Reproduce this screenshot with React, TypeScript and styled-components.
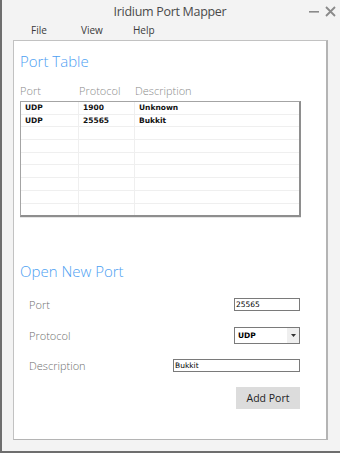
import React from "react";
import styled, { createGlobalStyle } from "styled-components";

const Global = createGlobalStyle`
  html, body { margin: 0; padding: 0; background: #f3f3f3; }
  * { box-sizing: border-box; }
`;

const Window = styled.div`
  width: 340px;
  height: 453px;
  background: #f3f3f3;
  border-left: 2px solid #6e6e6e;
  border-bottom: 2px solid #6e6e6e;
  display: flex;
  flex-direction: column;
  font-family: "Open Sans", "Liberation Sans", sans-serif;
`;

const TitleBar = styled.div`
  height: 22px;
  display: grid;
  grid-template-columns: 1fr;
  grid-template-rows: 22px;
  align-items: center;
`;

const Title = styled.div`
  grid-area: 1 / 1;
  justify-self: center;
  white-space: nowrap;
  font-size: 12.5px;
  letter-spacing: -0.3px;
  color: #4a4a4a;
  margin-left: -2px;
`;

const Controls = styled.div`
  grid-area: 1 / 1;
  justify-self: end;
  display: flex;
  align-items: center;
  gap: 5px;
  padding-right: 4px;
`;

const MenuBar = styled.div`
  height: 16px;
  display: flex;
  align-items: center;
  padding-left: 29px;
`;

const MenuItem = styled.div<{ $w: number }>`
  width: ${(p) => p.$w}px;
  font-size: 10px;
  color: #3a3a3a;
`;

const Panel = styled.div`
  margin: 2px 0 0 11px;
  width: 315px;
  height: 400px;
  background: #fff;
  border: 1px solid #c2c2c2;
  border-right: 2px solid #b4b4b4;
  border-bottom: 1px solid #b4b4b4;
  padding: 0 0 0 6px;
  display: flex;
  flex-direction: column;
`;

const Heading = styled.div<{ $top: number }>`
  margin-top: ${(p) => p.$top}px;
  height: 22px;
  line-height: 22px;
  font-size: 15px;
  font-weight: 300;
  color: #4da0f2;
`;

const ColHeads = styled.div`
  margin-top: 12px;
  display: grid;
  grid-template-columns: 59px 56px 1fr;
  font-size: 11px;
  font-weight: 300;
  color: #8a8a8a;
  height: 14px;
  line-height: 14px;
`;

const Table = styled.div`
  margin-top: 3px;
  width: 281px;
  height: 116px;
  border: 1px solid #a4a4a4;
  border-right: 2px solid #8e8e8e;
  border-bottom: 2px solid #8e8e8e;
  box-shadow: 0 1px 0 #e6e6e6;
  display: flex;
  flex-direction: column;
  overflow: hidden;
`;

const Row = styled.div`
  flex: 0 0 12.7px;
  display: grid;
  grid-template-columns: 58px 56px 1fr;
  border-bottom: 1px solid #efefef;
  &:last-child { border-bottom: none; }
`;

const Cell = styled.div`
  border-right: 1px solid #efefef;
  padding-left: 4px;
  font-family: "DejaVu Sans", "Liberation Sans", sans-serif;
  font-weight: bold;
  font-size: 7.5px;
  line-height: 11.7px;
  color: #111;
  &:last-child { border-right: none; }
`;

const Form = styled.div`
  display: flex;
  flex-direction: column;
  padding-left: 9px;
  width: 280px;
`;

const FormRow = styled.div<{ $h: number; $gap: number }>`
  height: ${(p) => p.$h}px;
  margin-top: ${(p) => p.$gap}px;
  display: flex;
  align-items: center;
  justify-content: space-between;
`;

const Label = styled.div`
  font-size: 11px;
  font-weight: 300;
  color: #6e6e6e;
`;

const Field = styled.div<{ $w: number; $h: number }>`
  width: ${(p) => p.$w}px;
  height: ${(p) => p.$h}px;
  border: 1px solid #7a7a7a;
  background: #fff;
  display: flex;
  align-items: center;
  padding-left: 1px;
  font-family: "DejaVu Sans", "Liberation Sans", sans-serif;
  font-size: 7.5px;
  color: #000;
`;

const SelectText = styled.span`
  flex: 1;
  padding-left: 2px;
  font-weight: bold;
`;

const SelectBtn = styled.div`
  width: 12px;
  height: 100%;
  background: #efefef;
  display: flex;
  align-items: center;
  justify-content: center;
`;

const ButtonRow = styled.div`
  margin-top: 15px;
  display: flex;
  justify-content: flex-end;
`;

const Button = styled.div`
  width: 64px;
  height: 22px;
  background: #dcdcdc;
  display: flex;
  align-items: center;
  justify-content: center;
  font-size: 10.5px;
  color: #222;
`;

const rows: [string, string, string][] = [
  ["UDP", "1900", "Unknown"],
  ["UDP", "25565", "Bukkit"],
];

export default function App() {
  const all = [...rows, ...Array.from({ length: 7 }, () => ["", "", ""] as [string, string, string])];
  return (
    <>
      <Global />
      <Window>
        <TitleBar>
          <Title>Iridium Port Mapper</Title>
          <Controls>
            <svg width="11" height="11" viewBox="0 0 11 11">
              <rect x="0" y="5" width="10" height="1.6" fill="#8a8a8a" />
            </svg>
            <svg width="11" height="11" viewBox="0 0 11 11">
              <path d="M1 1 L10 10 M10 1 L1 10" stroke="#8a8a8a" strokeWidth="1.8" />
            </svg>
          </Controls>
        </TitleBar>
        <MenuBar>
          <MenuItem $w={50}>File</MenuItem>
          <MenuItem $w={52}>View</MenuItem>
          <MenuItem $w={40}>Help</MenuItem>
        </MenuBar>
        <Panel>
          <Heading $top={9}>Port Table</Heading>
          <ColHeads>
            <span>Port</span>
            <span>Protocol</span>
            <span>Description</span>
          </ColHeads>
          <Table>
            {all.map((r, i) => (
              <Row key={i}>
                <Cell>{r[0]}</Cell>
                <Cell>{r[1]}</Cell>
                <Cell>{r[2]}</Cell>
              </Row>
            ))}
          </Table>
          <Heading $top={43}>Open New Port</Heading>
          <Form>
            <FormRow $h={13} $gap={16}>
              <Label>Port</Label>
              <Field $w={66} $h={13}>25565</Field>
            </FormRow>
            <FormRow $h={17} $gap={16}>
              <Label>Protocol</Label>
              <Field $w={66} $h={17}>
                <SelectText>UDP</SelectText>
                <SelectBtn>
                  <svg width="5" height="3" viewBox="0 0 5 3">
                    <path d="M0 0 L5 0 L2.5 3 Z" fill="#333" />
                  </svg>
                </SelectBtn>
              </Field>
            </FormRow>
            <FormRow $h={13} $gap={15}>
              <Label>Description</Label>
              <Field $w={127} $h={13}>Bukkit</Field>
            </FormRow>
            <ButtonRow>
              <Button>Add Port</Button>
            </ButtonRow>
          </Form>
        </Panel>
      </Window>
    </>
  );
}
